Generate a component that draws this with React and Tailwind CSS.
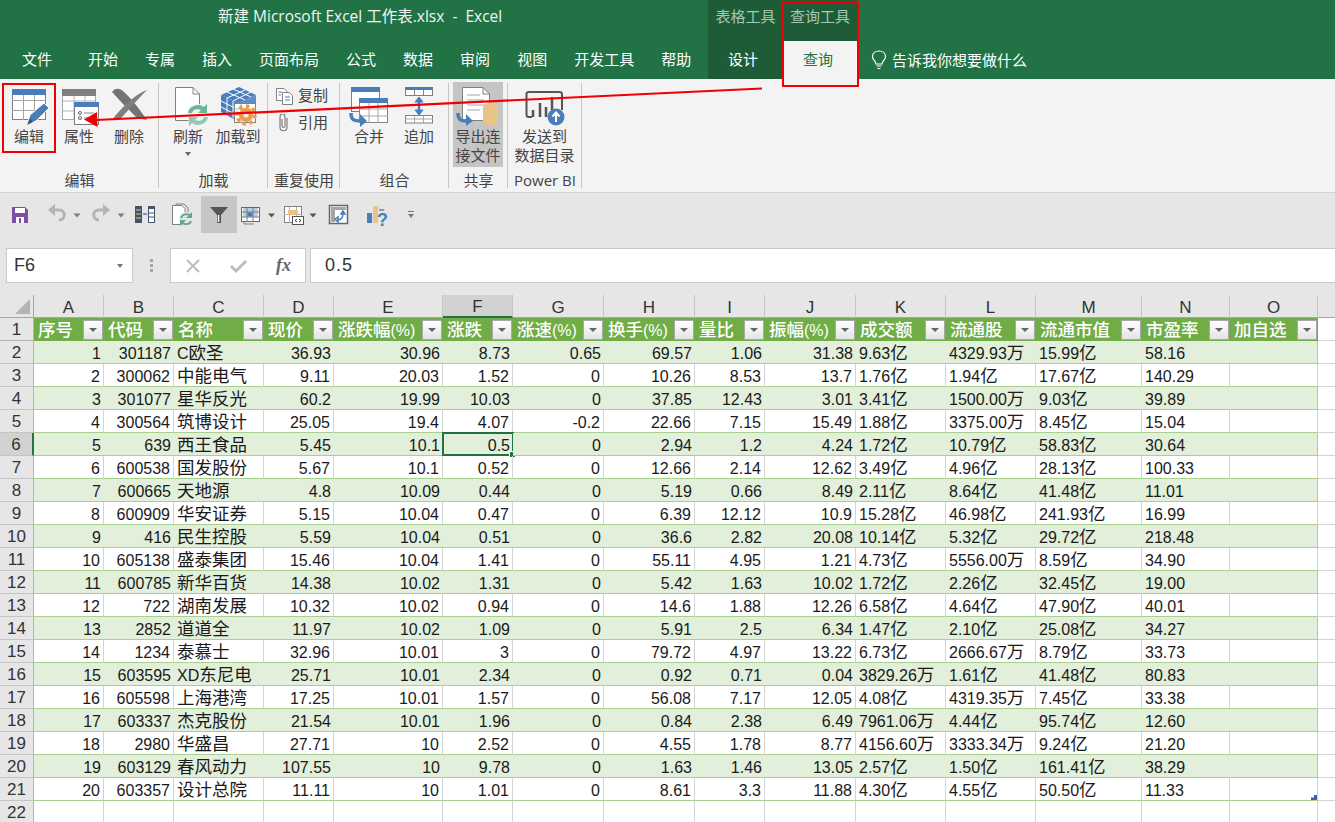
const CJK = "[font-family:'Liberation_Sans','Noto_Sans_CJK_SC',sans-serif]";
const UI = "[font-family:'Open_Sans','Noto_Sans_CJK_SC',sans-serif]";
const COLS = "grid grid-rows-[23px] grid-cols-[34px_70px_70px_90px_70px_109px_70px_91px_91px_70px_91px_90px_90px_106px_88px_88px_17px]";

const LETTERS = ["A", "B", "C", "D", "E", "F", "G", "H", "I", "J", "K", "L", "M", "N", "O"];
const HEADERS = ["序号", "代码", "名称", "现价", "涨跌幅(%)", "涨跌", "涨速(%)", "换手(%)", "量比", "振幅(%)", "成交额", "流通股", "流通市值", "市盈率", "加自选"];
const TABS = ["开始", "专属", "插入", "页面布局", "公式", "数据", "审阅", "视图", "开发工具", "帮助"];

const ROWS = [
  [1, 301187, "C欧圣", 36.93, 30.96, 8.73, 0.65, 69.57, 1.06, 31.38, "9.63亿", "4329.93万", "15.99亿", "58.16"],
  [2, 300062, "中能电气", 9.11, 20.03, 1.52, 0, 10.26, 8.53, 13.7, "1.76亿", "1.94亿", "17.67亿", "140.29"],
  [3, 301077, "星华反光", 60.2, 19.99, 10.03, 0, 37.85, 12.43, 3.01, "3.41亿", "1500.00万", "9.03亿", "39.89"],
  [4, 300564, "筑博设计", 25.05, 19.4, 4.07, -0.2, 22.66, 7.15, 15.49, "1.88亿", "3375.00万", "8.45亿", "15.04"],
  [5, 639, "西王食品", 5.45, 10.1, 0.5, 0, 2.94, 1.2, 4.24, "1.72亿", "10.79亿", "58.83亿", "30.64"],
  [6, 600538, "国发股份", 5.67, 10.1, 0.52, 0, 12.66, 2.14, 12.62, "3.49亿", "4.96亿", "28.13亿", "100.33"],
  [7, 600665, "天地源", 4.8, 10.09, 0.44, 0, 5.19, 0.66, 8.49, "2.11亿", "8.64亿", "41.48亿", "11.01"],
  [8, 600909, "华安证券", 5.15, 10.04, 0.47, 0, 6.39, 12.12, 10.9, "15.28亿", "46.98亿", "241.93亿", "16.99"],
  [9, 416, "民生控股", 5.59, 10.04, 0.51, 0, 36.6, 2.82, 20.08, "10.14亿", "5.32亿", "29.72亿", "218.48"],
  [10, 605138, "盛泰集团", 15.46, 10.04, 1.41, 0, 55.11, 4.95, 1.21, "4.73亿", "5556.00万", "8.59亿", "34.90"],
  [11, 600785, "新华百货", 14.38, 10.02, 1.31, 0, 5.42, 1.63, 10.02, "1.72亿", "2.26亿", "32.45亿", "19.00"],
  [12, 722, "湖南发展", 10.32, 10.02, 0.94, 0, 14.6, 1.88, 12.26, "6.58亿", "4.64亿", "47.90亿", "40.01"],
  [13, 2852, "道道全", 11.97, 10.02, 1.09, 0, 5.91, 2.5, 6.34, "1.47亿", "2.10亿", "25.08亿", "34.27"],
  [14, 1234, "泰慕士", 32.96, 10.01, 3, 0, 79.72, 4.97, 13.22, "6.73亿", "2666.67万", "8.79亿", "33.73"],
  [15, 603595, "XD东尼电", 25.71, 10.01, 2.34, 0, 0.92, 0.71, 0.04, "3829.26万", "1.61亿", "41.48亿", "80.83"],
  [16, 605598, "上海港湾", 17.25, 10.01, 1.57, 0, 56.08, 7.17, 12.05, "4.08亿", "4319.35万", "7.45亿", "33.38"],
  [17, 603337, "杰克股份", 21.54, 10.01, 1.96, 0, 0.84, 2.38, 6.49, "7961.06万", "4.44亿", "95.74亿", "12.60"],
  [18, 2980, "华盛昌", 27.71, 10, 2.52, 0, 4.55, 1.78, 8.77, "4156.60万", "3333.34万", "9.24亿", "21.20"],
  [19, 603129, "春风动力", 107.55, 10, 9.78, 0, 1.63, 1.46, 13.05, "2.57亿", "1.50亿", "161.41亿", "38.29"],
  [20, 603357, "设计总院", 11.11, 10, 1.01, 0, 8.61, 3.3, 11.88, "4.30亿", "4.55亿", "50.50亿", "11.33"],
];

// latin runs are narrower than the cjk ones in the sheet font
function Txt({ children }) {
  return String(children)
    .split(/([\u4e00-\u9fff]+)/)
    .map((part, i) =>
      /[\u4e00-\u9fff]/.test(part) ? (
        <span key={i} className="text-[17.5px] leading-[20px]">{part}</span>
      ) : (
        <span key={i}>{part}</span>
      )
    );
}

function TableIcon() {
  return (
    <svg width="50" height="45" viewBox="4 82 50 45">
      <rect x="12.5" y="89.5" width="33" height="30" fill="#fff" stroke="#808080" />
      <path d="M12 100.5H46M12 110.5H46M23.5 95V120M34.5 95V120" stroke="#a6a6a6" />
      <rect x="12" y="89" width="34" height="6" fill="#4a7ebb" />
      <path d="M27 125L30 115L44 103L49 108L36 121Z" fill="#4a7ebb" stroke="#fff" strokeWidth="1" />
      <path d="M27 125L30 118L33 122Z" fill="#44546a" />
    </svg>
  );
}

function PropsIcon() {
  return (
    <svg width="50" height="45" viewBox="54 82 50 45">
      <rect x="62.5" y="89.5" width="33" height="30" fill="#fff" stroke="#a6a6a6" />
      <path d="M62 101H96M62 111H96M74 96V120M85 96V120" stroke="#b3b3b3" />
      <rect x="62" y="89" width="34" height="7" fill="#7f7f7f" />
      <rect x="74.5" y="102.5" width="24" height="22" fill="#fff" stroke="#808080" />
      <rect x="74" y="102" width="25" height="5" fill="#4a7ebb" />
      <circle cx="80" cy="113" r="1.5" fill="none" stroke="#666" />
      <circle cx="80" cy="118" r="1.5" fill="none" stroke="#666" />
      <path d="M84 113H94M84 118H90" stroke="#888" />
    </svg>
  );
}

function DeleteIcon() {
  return (
    <svg width="50" height="45" viewBox="104 82 50 45">
      <path d="M112 92C115 88 119 88 123 91C132 99 140 110 147 120L137 118C129 110 120 101 112 92Z" fill="#737373" />
      <path d="M147 90C138 93 123 105 112 120C116 121 120 120 123 116C130 108 139 98 147 90Z" fill="#7f7f7f" />
    </svg>
  );
}

function RefreshIcon() {
  return (
    <svg width="50" height="45" viewBox="163 82 50 45">
      <path d="M175.5 87.5H193L199.5 94V120.5H175.5Z" fill="#fff" stroke="#808080" />
      <path d="M193 87.5V94H199.5" fill="none" stroke="#808080" />
      <circle cx="198" cy="115" r="11" fill="#f3f3f3" />
      <path d="M190 113C191 107 200 105 204 110" fill="none" stroke="#6db39a" strokeWidth="4" />
      <path d="M207 104V113H198Z" fill="#6db39a" />
      <path d="M206 117C205 123 196 125 192 120" fill="none" stroke="#94c8b2" strokeWidth="4" />
      <path d="M189 126V117H198Z" fill="#94c8b2" />
    </svg>
  );
}

function CubeIcon() {
  return (
    <svg width="50" height="45" viewBox="213 82 50 45">
      <path d="M239 87L256 95L239 103L221 95Z" fill="#4a7ebb" />
      <path d="M221 95V112L239 122V103Z" fill="#4a7ebb" />
      <path d="M256 95V112L239 122V103Z" fill="#5b8ec9" />
      <path d="M227 92L245 100M233 89L251 97M245 90L227 98M251 92L233 101M227 98V115M233 101V118M221 101L239 110M221 107L239 116" stroke="#fff" fill="none" />
      <rect x="234.5" y="103.5" width="21" height="19" fill="#fff" stroke="#808080" />
      <path d="M234 109H256M234 115H242M241 104V123" stroke="#b0b0b0" />
      <circle cx="246" cy="115" r="7" fill="#ed9b4a" />
      <circle cx="246" cy="115" r="9" fill="none" stroke="#ed9b4a" strokeWidth="3.5" strokeDasharray="3.5 3.5" />
      <circle cx="246" cy="115" r="2.5" fill="#f3f3f3" />
    </svg>
  );
}

function MergeIcon() {
  return (
    <svg width="50" height="45" viewBox="344 82 50 45">
      <rect x="351.5" y="87.5" width="28" height="24" fill="#fff" stroke="#808080" />
      <rect x="351" y="87" width="29" height="5" fill="#4a7ebb" />
      <rect x="359.5" y="98.5" width="28" height="24" fill="#fff" stroke="#808080" />
      <path d="M359 109H388M359 116H388M369 103V123M378 103V123" stroke="#a6a6a6" />
      <rect x="359" y="98" width="29" height="5" fill="#4a7ebb" />
      <path d="M351 113C351 120 354 121 361 121" fill="none" stroke="#4a7ebb" strokeWidth="3.5" />
      <path d="M360 114L367 121L360 127Z" fill="#4a7ebb" />
    </svg>
  );
}

function AppendIcon() {
  return (
    <svg width="50" height="45" viewBox="394 82 50 45">
      <rect x="405.5" y="87.5" width="27" height="8" fill="#fff" stroke="#808080" />
      <rect x="405" y="87" width="28" height="3" fill="#4a7ebb" />
      <path d="M414.5 90V95M423.5 90V95" stroke="#808080" />
      <path d="M419 99V113" stroke="#4a7ebb" strokeWidth="2.5" />
      <path d="M415 102L419 97L423 102ZM415 110L419 115L423 110Z" fill="#4a7ebb" stroke="#4a7ebb" />
      <rect x="405.5" y="115.5" width="27" height="7.5" fill="#fff" stroke="#808080" />
      <path d="M405 119H433M414.5 116V123M423.5 116V123" stroke="#a6a6a6" />
    </svg>
  );
}

function ExportIcon() {
  return (
    <svg width="50" height="45" viewBox="453 82 50 45">
      <path d="M462.5 87.5H483L489.5 94V120.5H462.5Z" fill="#fff" stroke="#808080" />
      <path d="M483 87.5V94H489.5" fill="none" stroke="#808080" />
      <path d="M467 95H480M467 100H484M467 105H484M467 110H480" stroke="#a6a6a6" />
      <path d="M483 106C483 102 498 102 498 106V122C498 127 483 127 483 122Z" fill="#e8c48a" />
      <path d="M458 113C458 120 461 121 467 121" fill="none" stroke="#4a7ebb" strokeWidth="3.5" />
      <path d="M466 114L473 121L466 126Z" fill="#4a7ebb" />
    </svg>
  );
}

function SendIcon() {
  return (
    <svg width="50" height="45" viewBox="520 82 50 45">
      <path d="M532 117H529C527 117 526.500 116 526.500 115V94C526.500 93 527.500 92 529 92H559C561 92 562 93 562 94V110" fill="none" stroke="#555" strokeWidth="2" />
      <path d="M533 117V110M540 117V103M546 117V107M552 110V97" stroke="#555" strokeWidth="2.500" />
      <circle cx="556" cy="117" r="8.500" fill="#4a7ebb" />
      <path d="M556 122V113M552.500 116.500L556 112.500L559.500 116.500" fill="none" stroke="#fff" strokeWidth="2" />
    </svg>
  );
}

function RibbonBtn({ icon, lines, active, width = "w-[50px]", children }) {
  return (
    <div className={`flex flex-col items-center ${width} h-[85px] ${active ? "bg-[#c5c5c5]" : ""}`}>
      <div className="h-[45px]">{icon}</div>
      {lines.map((line) => (
        <div key={line} className="h-[19px] leading-[19px] whitespace-nowrap text-[15px] text-[#444]">{line}</div>
      ))}
      {children}
    </div>
  );
}

function Group({ label, width, children }) {
  return (
    <div className={`${width} flex flex-col relative`}>
      <div className="flex-1 flex pl-[4px]">{children}</div>
      <div className="h-[24px] leading-[24px] text-center whitespace-nowrap text-[15px] text-[#444]">{label}</div>
      <div className="absolute right-0 top-[1px] bottom-[4px] w-px bg-[#c6c6c6]" />
    </div>
  );
}

function Ribbon() {
  return (
    <div className="h-[114px] bg-[#f3f3f3] border-b border-[#d2d2d2] flex pt-[3px]">
      <Group label="编辑" width="w-[159px]">
        <RibbonBtn icon={<TableIcon />} lines={["编辑"]} />
        <RibbonBtn icon={<PropsIcon />} lines={["属性"]} />
        <RibbonBtn icon={<DeleteIcon />} lines={["删除"]} />
      </Group>
      <Group label="加载" width="w-[109px]">
        <RibbonBtn icon={<RefreshIcon />} lines={["刷新"]}>
          <div className="mt-[6px] w-0 h-0 border-x-[3.5px] border-x-transparent border-t-[4px] border-t-[#666]" />
        </RibbonBtn>
        <RibbonBtn icon={<CubeIcon />} lines={["加载到"]} />
      </Group>
      <Group label="重复使用" width="w-[72px]">
        <div className="flex flex-col text-[15px] text-[#444] pl-[4px]">
          <div className="flex items-center h-[27px]">
            <svg width="18" height="18" viewBox="276 85 18 18">
              <path d="M276.500 86.500H284L287 89.500V98.500H276.500Z" fill="#fff" stroke="#808080" />
              <path d="M282.500 90.500H289.500L292.500 93.500V102.500H282.500Z" fill="#fff" stroke="#808080" />
              <path d="M278.500 90H282M278.500 93H281M285 95H290M285 98H290" stroke="#4a7ebb" />
            </svg>
            <span className="ml-[4px]">复制</span>
          </div>
          <div className="flex items-center h-[27px]">
            <svg width="18" height="18" viewBox="276 113 18 18">
              <path d="M287 117V126C287 131 280 131 280 126V116C280 112 285 112 285 116V125C285 127 282 127 282 125V118" fill="none" stroke="#7f7f7f" strokeWidth="1.200" />
            </svg>
            <span className="ml-[4px]">引用</span>
          </div>
        </div>
      </Group>
      <Group label="组合" width="w-[109px]">
        <RibbonBtn icon={<MergeIcon />} lines={["合并"]} />
        <RibbonBtn icon={<AppendIcon />} lines={["追加"]} />
      </Group>
      <Group label="共享" width="w-[59px]">
        <RibbonBtn icon={<ExportIcon />} lines={["导出连", "接文件"]} active />
      </Group>
      <Group label="Power BI" width="w-[74px]">
        <div className="-ml-[4px] w-[73px] flex justify-center">
          <RibbonBtn icon={<SendIcon />} lines={["发送到", "数据目录"]} />
        </div>
      </Group>
    </div>
  );
}

function Caret({ x }) {
  return <path d={`M${x - 3.500} 213.500H${x + 3.500}L${x} 217.500Z`} fill="#7f7f7f" />;
}

function QuickAccess() {
  return (
    <div className="flex pl-[8px] pt-[3px] h-[40px]">
      <svg width="34" height="37" viewBox="8 196 34 37">
        <path d="M12 207H25L28 210V223H12Z" fill="#7b4fa3" />
        <rect x="15" y="208" width="10" height="5" fill="#fff" />
        <rect x="16" y="217" width="8" height="6" fill="#fff" />
        <rect x="19" y="218" width="2" height="5" fill="#7b4fa3" />
      </svg>
      <svg width="44" height="37" viewBox="42 196 44 37">
        <path d="M52 210H59C66 210 66 220 59 220" fill="none" stroke="#b4b4b4" strokeWidth="3" />
        <path d="M55 204L48 210L55 216Z" fill="#b4b4b4" />
        <Caret x={77} />
      </svg>
      <svg width="42" height="37" viewBox="86 196 42 37">
        <path d="M106 210H99C92 210 92 220 99 220" fill="none" stroke="#b4b4b4" strokeWidth="3" />
        <path d="M103 204L110 210L103 216Z" fill="#b4b4b4" />
        <Caret x={121} />
      </svg>
      <svg width="36" height="37" viewBox="128 196 36 37">
        <rect x="135" y="206" width="7" height="17" fill="#44546a" />
        <path d="M136 210H141M136 214H141M136 218H141" stroke="#e8c48a" />
        <rect x="148.500" y="206.500" width="6" height="16" fill="#fff" stroke="#44546a" />
        <rect x="148" y="206" width="7" height="3" fill="#44546a" />
        <path d="M149 213H154M149 217H154" stroke="#44546a" />
        <path d="M143 214H147" stroke="#4a7ebb" strokeWidth="1.500" />
      </svg>
      <svg width="37" height="37" viewBox="164 196 37 37">
        <path d="M172.500 205.500H182L185 208.500V224.500H172.500Z" fill="#fff" stroke="#808080" />
        <path d="M176 205V204H184L188 208V212" fill="none" stroke="#808080" />
        <circle cx="186" cy="219" r="7" fill="#e6e6e6" />
        <path d="M181 218C182 214 188 213 191 216" fill="none" stroke="#5fa98a" strokeWidth="2" />
        <path d="M192 212V218H186Z" fill="#5fa98a" />
        <path d="M191 221C190 225 184 225 181 222" fill="none" stroke="#5fa98a" strokeWidth="2" />
        <path d="M180 226V220H186Z" fill="#5fa98a" />
      </svg>
      <div className="w-[36px] h-[37px] bg-[#c6c6c6] flex items-center justify-center">
        <svg width="20" height="20" viewBox="0 0 20 20">
          <path d="M1 2H19L12 10V18H8V10Z" fill="#555" />
          <path d="M9.500 10V17" stroke="#fff" strokeWidth="1.500" />
        </svg>
      </div>
      <svg width="41" height="37" viewBox="237 196 41 37">
        <rect x="241.500" y="207.500" width="18" height="14" fill="#fff" stroke="#666" />
        <rect x="243" y="208" width="15" height="9" fill="#b8cce4" />
        <path d="M241 212H260M241 217H260M247 208V222M253 208V222" stroke="#7f7f7f" />
        <rect x="247.500" y="212.500" width="5" height="4" fill="#4a7ebb" />
        <path d="M244 222V224H254" fill="none" stroke="#808080" />
        <path d="M268 213.500H275L271.500 217.500Z" fill="#555" />
      </svg>
      <svg width="42" height="37" viewBox="278 196 42 37">
        <rect x="284.500" y="206.500" width="17" height="16" fill="#fff" stroke="#808080" />
        <path d="M284 214.500H302M289.500 207V223M296.500 207V223" stroke="#b0b0b0" />
        <rect x="288" y="210" width="10" height="5" fill="#e8c48a" />
        <rect x="292.500" y="216.500" width="11" height="8" fill="#fff" stroke="#555" />
        <path d="M297 219L295 220.500L297 222M299 219L301 220.500L299 222" fill="none" stroke="#333" />
        <path d="M309.500 213.500H316.500L313 217.500Z" fill="#555" />
      </svg>
      <svg width="38" height="37" viewBox="320 196 38 37">
        <rect x="329.500" y="205.500" width="18" height="18" fill="#fff" stroke="#666" strokeWidth="1.500" />
        <rect x="331" y="207" width="15" height="3" fill="#a6a6a6" />
        <rect x="331" y="210" width="4" height="12" fill="#a6a6a6" />
        <path d="M338 220C342 220 343 217 343 213M335 219L338 217V222ZM341 214L343 211L345 214Z" fill="none" stroke="#4a7ebb" strokeWidth="1.500" />
      </svg>
      <svg width="40" height="37" viewBox="358 196 40 37">
        <rect x="367" y="213" width="5" height="10" fill="#4a7ebb" />
        <rect x="373" y="206" width="5" height="17" fill="#e8c48a" />
        <rect x="379" y="209" width="5" height="2" fill="#999" />
        <text x="377" y="226" fontSize="18" fontWeight="700" fill="#4a7ebb" fontFamily="Liberation Sans">?</text>
      </svg>
      <svg width="26" height="37" viewBox="398 196 26 37">
        <path d="M408 211.500H414" stroke="#777" />
        <path d="M408 214H414L411 218Z" fill="#777" />
      </svg>
    </div>
  );
}

function FormulaBar() {
  return (
    <div className="flex h-[35px] mt-[15px] text-[#333]">
      <div className={`ml-[6px] w-[127px] bg-white border border-[#c9c9c9] flex items-center justify-between px-[7px] text-[18px] ${CJK}`}>
        <span>F6</span>
        <span className="w-0 h-0 border-x-[3.5px] border-x-transparent border-t-[4px] border-t-[#777] mr-[2px]" />
      </div>
      <div className="w-[37px] flex flex-col items-center justify-center gap-[2px]">
        <div className="w-[3px] h-[3px] bg-[#a6a6a6]" />
        <div className="w-[3px] h-[3px] bg-[#a6a6a6]" />
        <div className="w-[3px] h-[3px] bg-[#a6a6a6]" />
      </div>
      <div className="w-[136px] bg-white border border-[#c9c9c9] flex items-center pl-[15px]">
        <svg width="14" height="14" viewBox="0 0 14 14"><path d="M1 1L13 13M13 1L1 13" stroke="#bdbdbd" strokeWidth="2" /></svg>
        <svg className="ml-[30px]" width="18" height="14" viewBox="0 0 18 14"><path d="M1 7L6 12L16 2" fill="none" stroke="#bdbdbd" strokeWidth="3" /></svg>
        <span className="ml-[28px] text-[18px] italic font-bold text-[#666] [font-family:'Liberation_Serif',serif]">fx</span>
      </div>
      <div className={`ml-[4px] flex-1 bg-white border border-[#c9c9c9] border-r-0 flex items-center pl-[14px] text-[18px] tracking-[1px] ${CJK}`}>0.5</div>
    </div>
  );
}

function FilterBtn() {
  return (
    <div className="w-[20px] h-[20px] shrink-0 border border-[#a8a8a8] bg-gradient-to-b from-white to-[#e4e4e8] flex items-center justify-center">
      <div className="w-0 h-0 border-x-[4px] border-x-transparent border-t-[4px] border-t-[#666]" />
    </div>
  );
}

function Sheet() {
  return (
    <div className={`${CJK} text-[16px] leading-[20px] text-[#1a1a1a] bg-white`}>
      <div className={`${COLS} bg-[#e6e6e6] text-[#333] text-[17px]`}>
        <div className="border-r border-b border-[#a6a6a6] flex items-end justify-end pr-[3px] pb-[3px]">
          <svg width="15" height="15" viewBox="0 0 15 15"><path d="M15 0V15H0Z" fill="#b4b4b4" /></svg>
        </div>
        {LETTERS.map((letter) => (
          <div
            key={letter}
            className={`flex items-center justify-center pt-[3px] border-r border-r-[#c4c4c4] ${letter === "F" ? "bg-[#d2d2d2] border-b-2 border-b-[#217346]" : "border-b border-b-[#a6a6a6]"}`}
          >
            {letter}
          </div>
        ))}
        <div className="border-b border-[#a6a6a6]" />
      </div>
      <div className={COLS}>
        <div className="flex items-center justify-center pt-[1px] bg-[#e6e6e6] border-r border-b border-[#b4b4b4] text-[17px] text-[#333]">1</div>
        {HEADERS.map((title) => (
          <div key={title} className="bg-[#70ad47] flex items-center justify-between pl-[4px] pr-px text-white font-medium overflow-hidden">
            <span className="whitespace-nowrap pt-[1px]"><Txt>{title}</Txt></span>
            <FilterBtn />
          </div>
        ))}
        <div className="border-b border-[#d4d4d4]" />
      </div>
      {ROWS.map((row, r) => {
        const band = r % 2 === 0;
        return (
          <div key={row[0]} className={COLS}>
            <div className={`flex items-center justify-center pt-[1px] border-b border-b-[#c4c4c4] text-[17px] text-[#333] ${r === 4 ? "bg-[#d2d2d2] border-r-2 border-r-[#217346]" : "bg-[#e6e6e6] border-r border-r-[#b4b4b4]"}`}>
              {r + 2}
            </div>
            {LETTERS.map((letter, c) => {
              const value = row[c];
              const left = c === 2 || c >= 10;
              return (
                <div
                  key={letter}
                  className={`relative flex items-center pt-[3px] whitespace-nowrap border-b border-b-[#a9d08e] ${left ? "justify-start pl-[3px]" : "justify-end pr-[3px]"} ${band ? "bg-[#e2efda]" : "border-r border-r-[#d4d4d4]"} ${c === 14 ? "border-r border-r-[#a9d08e]" : ""}`}
                >
                  {value !== undefined && <span><Txt>{value}</Txt></span>}
                  {r === 4 && c === 5 && (
                    <div className="absolute -left-px -top-px -right-px -bottom-px border-2 border-[#217346]">
                      <div className="absolute -right-[4px] -bottom-[4px] w-[7px] h-[7px] bg-[#217346] border border-white" />
                    </div>
                  )}
                  {r === 19 && c === 14 && (
                    <div className="absolute right-0 bottom-0 w-[6px] h-[5px] [clip-path:polygon(100%_0,100%_100%,0_100%,0_50%,50%_50%,50%_0)] bg-[#4a5ab0]" />
                  )}
                </div>
              );
            })}
            <div className="border-b border-[#d4d4d4]" />
          </div>
        );
      })}
      <div className={COLS}>
        <div className="flex items-center justify-center pt-[1px] bg-[#e6e6e6] border-r border-[#b4b4b4] text-[17px] text-[#333]">22</div>
        {LETTERS.map((letter) => (
          <div key={letter} className="border-r border-[#d4d4d4]" />
        ))}
        <div />
      </div>
    </div>
  );
}

export default function App() {
  return (
    <div className={`relative w-[1335px] h-[822px] overflow-hidden bg-[#e6e6e6] ${UI}`}>
      <header className="h-[79px] bg-[#217346] flex text-white text-[15px]">
        <div className="w-[708px] flex flex-col">
          <div className="h-[41px] pt-[6px] pl-[218px] text-[15.5px] text-[#f0f5f2] whitespace-pre leading-[21px]">新建 Microsoft Excel 工作表.xlsx  -  Excel</div>
          <nav className="h-[38px] flex items-center pl-[22px] pb-[2px]">
            <span className="mr-[36px] whitespace-nowrap">文件</span>
            {TABS.map((tab) => (
              <span key={tab} className="mr-[27px] whitespace-nowrap">{tab}</span>
            ))}
          </nav>
        </div>
        <div className="w-[75px] bg-[#1e5c38] flex flex-col">
          <div className="h-[41px] flex justify-center pt-[6px] leading-[21px] text-[15px] text-[#a5c7b3]">表格工具</div>
          <div className="h-[38px] flex items-center pl-[20px] pb-[2px]">设计</div>
        </div>
        <div className="w-[74px] flex flex-col">
          <div className="h-[41px] bg-[#1e5c38] flex justify-center pt-[6px] leading-[21px] text-[15px] text-[#a5c7b3]">查询工具</div>
          <div className="h-[38px] bg-[#f3f3f3] flex items-center pl-[20px] pb-[2px] text-[#217346]">查询</div>
        </div>
        <div className="h-[38px] mt-[41px] flex items-center pl-[14px]">
          <svg width="16" height="20" viewBox="0 0 16 20" fill="none" stroke="#fff" strokeWidth="1.200">
            <path d="M5 14C5 11 1.500 10 1.500 6.500C1.500 3 4.500 1 8 1C11.500 1 14.500 3 14.500 6.500C14.500 10 11 11 11 14Z" />
            <path d="M5.500 16H10.500M6.500 18.500H9.500" />
          </svg>
          <span className="ml-[5px]">告诉我你想要做什么</span>
        </div>
      </header>
      <Ribbon />
      <QuickAccess />
      <FormulaBar />
      <div className="h-[12px]" />
      <Sheet />

      {/* annotations drawn on top of the screenshot */}
      <div className="absolute left-[2px] top-[83px] w-[54px] h-[70px] border-2 border-[#f00000]" />
      <div className="absolute left-[782px] top-[2px] w-[77px] h-[85px] border-2 border-[#f00000]" />
      <svg className="absolute left-0 top-0" width="800" height="140" viewBox="0 0 800 140">
        <path d="M762 88.500L96 120" stroke="#f00000" strokeWidth="2.200" />
        <path d="M84 119.500L97 112L97.500 127Z" fill="#f00000" />
      </svg>
    </div>
  );
}
